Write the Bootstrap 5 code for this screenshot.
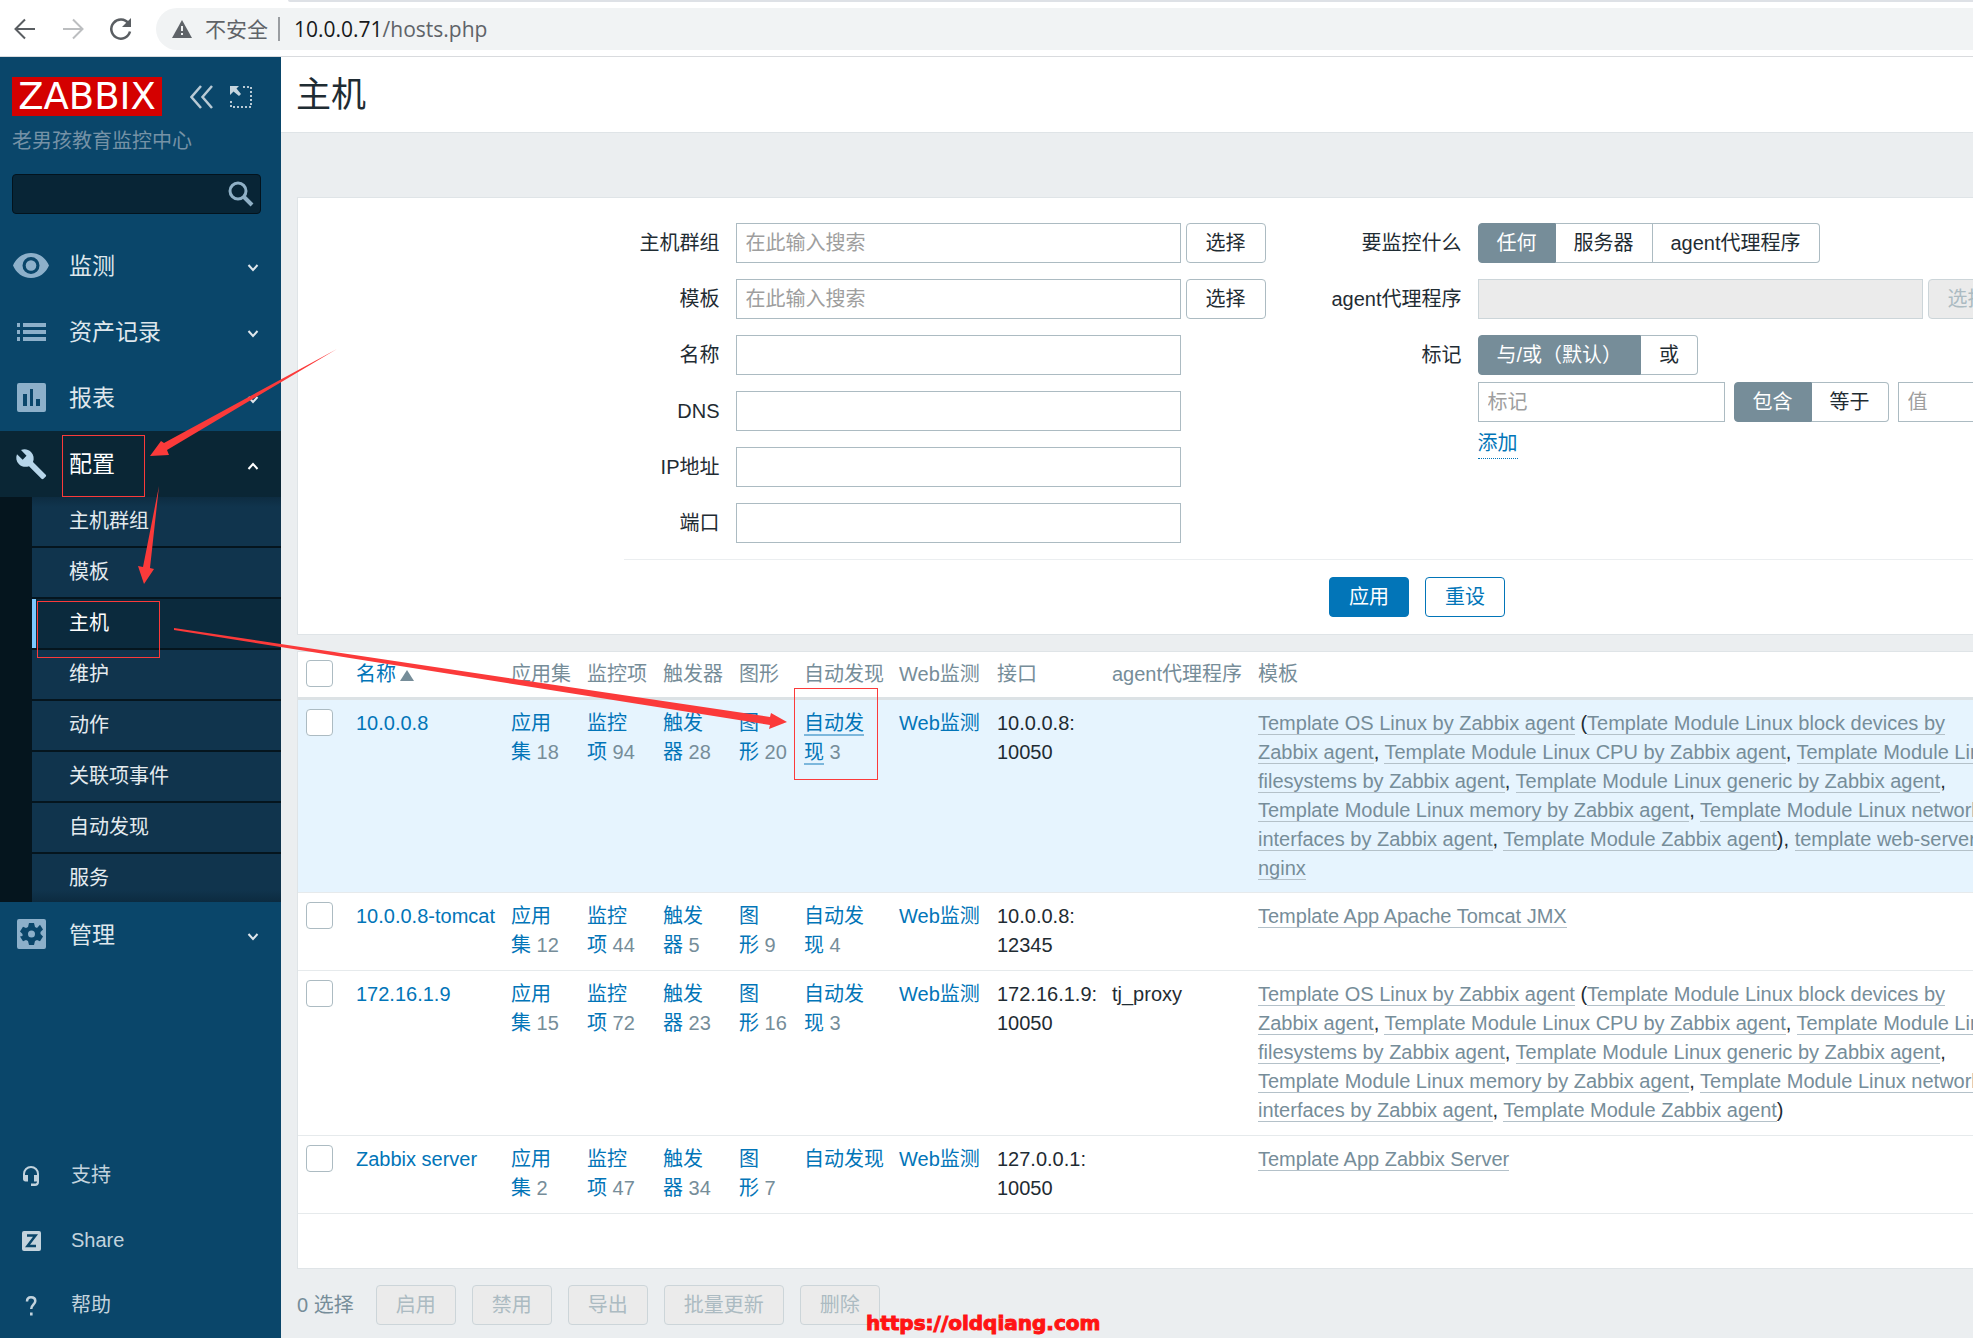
<!DOCTYPE html>
<html lang="zh-CN">
<head>
<meta charset="utf-8">
<meta name="viewport" content="width=device-width, initial-scale=1">
<title>主机</title>
<link href="https://cdn.jsdelivr.net/npm/bootstrap@5.3.0/dist/css/bootstrap.min.css" rel="stylesheet">
<style>
  :root { --ink:#1f2c33; --grey:#768d99; --line:#acbbc2; --blue:#0275b8; --soft:#dfe4e7; --mark:#fb3a3a; }
  body { font-family:"Liberation Sans","Noto Sans CJK SC",sans-serif; font-size:20px; line-height:29px; color:var(--ink); background:#ebeef0; overflow:hidden; }
  a { text-decoration:none; }

  /* browser bar */
  .browser-bar { height:57px; background:#fff; border-bottom:1px solid #d9dbde; padding:8px 0 6px 12px; gap:22px; }
  .tab-edge { position:absolute; top:0; left:288px; right:0; height:2px; background:#dee1e6; border-bottom-left-radius:4px; }
  .browser-btn { border:0; background:none; padding:0; width:26px; height:26px; line-height:0; }
  .url-pill { height:42px; border-radius:21px 0 0 21px; background:#f1f3f4; padding-left:16px; font-family:"Open Sans","Noto Sans CJK SC",sans-serif; font-size:21px; color:#5f6368; }
  .url-pill svg { margin-right:13px; }
  .url-pill b { font-weight:400; color:#17181a; }
  .url-split { width:2px; height:24px; background:#9a9da1; margin:0 14px 0 10px; }

  /* sidebar */
  .side { width:281px; background:#0a466a; color:#dfe7ec; }
  .side a { color:inherit; }
  .side-head { padding:20px 12px 0; }
  .logo { width:150px; height:39px; background:#d40000; color:#fff; font-family:"DejaVu Sans",sans-serif; font-size:37px; line-height:39px; }
  .server-name { color:#7592a6; height:29px; margin-top:11px; }
  .side-search { height:40px; width:249px; margin-top:18px; background:#082536; border:1px solid #03131d; border-radius:4px; }
  .side-search input { background:none; border:0; outline:0; color:#fff; min-width:0; padding:0 8px; }
  .side-search button { background:none; border:0; padding:0 6px 0 0; line-height:0; }
  .menu { margin-top:19px; }
  .menu-top { height:66px; padding:0 22px 0 13px; font-size:23px; }
  .menu-top > svg:first-child { width:36px; height:36px; margin-right:20px; color:#8db0ca; fill:currentColor; }
  .menu-top.open { background:#0a2635; color:#fff; height:66px; }
  .menu-top.open > svg:first-child { color:#b7d6ea; }
  .chev { width:12px; height:8px; fill:none; stroke:currentColor; stroke-width:2; margin-top:4px; }
  .submenu { background:#05151e; padding-left:32px; gap:2px; margin:0; list-style:none; display:flex; flex-direction:column; }
  .submenu a { display:block; height:49px; line-height:49px; background:#10344d; padding-left:37px; color:#e4ebef; }
  .submenu a.now { background:#0b2a3d; border-left:4px solid #7cc8ff; padding-left:33px; color:#fff; }
  .submenu li:first-child a { background:linear-gradient(#0d2c41,#10344d 10px); }
  .submenu li:last-child a { height:48px; background:linear-gradient(#10344d 36px,#0c2b40); }
  .side-foot a { height:65px; padding-left:20px; gap:29px; color:#c3d3dd; }
  .side-foot svg { width:22px; height:22px; fill:currentColor; }

  /* content */
  .content { min-width:0; overflow:hidden; }
  .page-head { height:76px; background:#fff; border-bottom:1px solid var(--soft); padding:17px 15px; }
  .page-head h1 { font-size:35px; line-height:42px; font-weight:400; margin:0; }
  .canvas-wide { min-width:2272px; padding:64px 16px 0; }
  .panel { background:#fff; border:1px solid var(--soft); }
  .filter-body { width:1587px; margin:0 auto; padding-top:25px; }
  .filter-cols { padding-bottom:16px; border-bottom:1px solid #ebeef0; }
  .left-fields { width:650px; gap:16px; }
  .right-fields { gap:16px; }
  .frow { display:flex; gap:16px; }
  .frow > .lbl { text-align:right; line-height:40px; flex:none; }
  .left-fields .lbl { width:96px; }
  .right-fields .lbl { width:188px; }
  .with-pick { display:flex; gap:5px; }
  .box { height:40px; border:1px solid var(--line); border-radius:0; padding:0 9px; font-size:20px; color:var(--ink); background:#fff; }
  .box::placeholder { color:#9e9e9e; opacity:1; }
  .box:disabled { background:#ebebeb; border-color:#ccd5d9; }
  .w-full-box { width:445px; }
  .w-tag-box { width:247px; }
  .zbtn { height:40px; border:1px solid var(--line); border-radius:4px; padding:0 19px; font-size:20px; line-height:38px; color:var(--ink); background:#fff; white-space:nowrap; }
  .zbtn:disabled { background:#ebebeb; border-color:#ccd5d9; color:#acbbc2; opacity:1; }
  .zbtn.main-btn { background:var(--blue); border-color:var(--blue); color:#fff; }
  .zbtn.alt-btn { border-color:var(--blue); color:var(--blue); }
  .seg .zbtn { border-radius:0; padding:0 18px; border-left:0; }
  .seg .zbtn:nth-of-type(1) { border-left:1px solid var(--line); border-radius:4px 0 0 4px; }
  .seg .zbtn:last-child { border-radius:0 4px 4px 0; }
  .seg .btn-check:checked + .zbtn { background:var(--grey); border-color:var(--grey); color:#fff; }
  .tag-rows { display:flex; flex-direction:column; gap:7px; }
  .tag-row { display:flex; gap:9px; }
  .add-link { color:var(--blue); border-bottom:1px dotted var(--blue); line-height:29px; align-self:flex-start; }
  .filter-foot { padding:17px 0; gap:16px; }

  .hosts { table-layout:fixed; width:100%; margin:0; border-collapse:separate; border-spacing:0; }
  .hosts th, .hosts td { padding:9px 8px; vertical-align:top; border-bottom:1px solid #e6eaec; text-align:left; font-weight:400; }
  .hosts tr + tr td { padding-bottom:10px; }
  .hosts th { color:var(--grey); padding:8px 8px; border-bottom:3px solid #dce2e5; white-space:nowrap; }
  .hosts a { color:var(--blue); }
  .hosts .num { color:var(--grey); }
  .hosts tr.hover td { background:#e6f4fe; }
  .hosts a.under { border-bottom:2px solid #7cb7dc; }
  .hosts a.tpl { color:var(--grey); border-bottom:1px solid #b4c1c9; }
  .hosts .form-check-input { width:27px; height:27px; margin:0; border:1px solid var(--line); border-radius:4px; display:block; float:none; background-color:#fff; }
  .sort-up { display:inline-block; border:7px solid transparent; border-top:0; border-bottom:11px solid var(--grey); margin-left:-2px; }
  .c-check{width:50px} .c-name{width:155px} .c-three{width:76px} .c-two{width:65px} .c-disc{width:95px} .c-web{width:98px} .c-if{width:115px} .c-proxy{width:146px} .c-tpl{width:764px}
  .table-tail { height:54px; }
  .actions { padding:16px 0 13px; color:var(--grey); gap:16px; }
  .actions .count { margin-right:6px; line-height:40px; }

  /* annotations over the page */
  .notes { position:absolute; left:0; top:0; width:1973px; height:1338px; pointer-events:none; }
  .notes rect { fill:none; stroke:var(--mark); stroke-width:1; }
  .notes polygon { fill:var(--mark); }
  .site-stamp { position:absolute; left:866px; top:1309px; font-family:"DejaVu Sans",sans-serif; font-weight:700; font-size:20px; color:#ff1414; -webkit-text-stroke:1px #ff1414; }
</style>
<script src="https://cdn.jsdelivr.net/npm/bootstrap@5.3.0/dist/js/bootstrap.bundle.min.js"></script>
</head>
<body>
<div class="d-flex flex-column min-vh-100 position-relative">
  <header class="browser-bar d-flex align-items-center">
    <span class="tab-edge"></span>
    <button class="browser-btn" type="button" aria-label="后退"><svg width="26" height="26" viewBox="0 0 26 26" fill="none" stroke="#5a5e62" stroke-width="2"><path d="M23 13H4M13 3.500 3.500 13l9.500 9.500"/></svg></button>
    <button class="browser-btn" type="button" aria-label="前进"><svg width="26" height="26" viewBox="0 0 26 26" fill="none" stroke="#bcbec0" stroke-width="2"><path d="M3 13h19M13 3.500 22.500 13 13 22.500"/></svg></button>
    <button class="browser-btn" type="button" aria-label="刷新"><svg width="26" height="26" viewBox="0 0 26 26" fill="none" stroke="#5a5e62" stroke-width="2.500"><path d="M20.500 7.500A9.500 9.500 0 1 0 22 15.500"/><path d="M23 2v9h-9z" fill="#5a5e62" stroke="none"/></svg></button>
    <div class="url-pill d-flex align-items-center flex-grow-1">
      <svg width="20" height="18" viewBox="0 0 20 18"><path d="M10 0 20 18H0z" fill="#5f6368"/><path d="M10 6v5M10 13v2" stroke="#f1f3f4" stroke-width="2"/></svg>
      <span>不安全</span><span class="url-split"></span><span><b>10.0.0.71</b>/hosts.php</span>
    </div>
  </header>

  <div class="d-flex flex-grow-1">
    <aside class="side d-flex flex-column flex-shrink-0">
      <div class="side-head">
        <div class="d-flex align-items-center">
          <a class="logo text-center text-white" href="#">ZABBIX</a>
          <a href="#" class="d-flex ms-4 ps-1" aria-label="收起"><svg width="24" height="24" viewBox="0 0 24 24" fill="none" stroke="#b9cad5" stroke-width="2.500"><path d="M11 1 1.500 12 11 23M22 1 12.500 12 22 23"/></svg></a>
          <a href="#" class="d-flex ms-3" aria-label="隐藏"><svg width="22" height="22" viewBox="0 0 22 22" fill="none" stroke="#b9cad5"><path d="M13 1h8v20H1v-8" stroke-width="2" stroke-dasharray="2 2"/><path d="M0 0h9L6.500 2.500 11 8l-2 2-5.500-4.500L0 9z" fill="#c6d5de" stroke="none"/></svg></a>
        </div>
        <div class="server-name">老男孩教育监控中心</div>
        <form class="side-search d-flex align-items-center">
          <input type="text" class="flex-grow-1" aria-label="搜索">
          <button type="button" aria-label="搜索"><svg width="26" height="26" viewBox="0 0 26 26" fill="none" stroke="#8fb0c6"><circle cx="10" cy="10" r="8" stroke-width="3"/><path d="m15.500 15.500 8.500 8.500" stroke-width="4"/></svg></button>
        </form>
      </div>

      <nav class="menu">
        <a class="menu-top d-flex align-items-center" href="#"><svg viewBox="0 0 36 36"><path fill-rule="evenodd" d="M18 5C9.500 5 3 10.500 0 17.500 3 24.500 9.500 30 18 30s15-5.500 18-12.500C33 10.500 26.500 5 18 5zm0 4a8.500 8.500 0 1 1 0 17 8.500 8.500 0 0 1 0-17z"/><circle cx="18" cy="17.500" r="5.300"/></svg>监测<svg class="chev ms-auto" viewBox="0 0 12 8"><path d="m1.500 1 4.500 5 4.500-5"/></svg></a>
        <a class="menu-top d-flex align-items-center" href="#"><svg viewBox="0 0 36 36"><path d="M4 9h3v4H4zm6 0h23v4H10zM4 16h3v4H4zm6 0h23v4H10zM4 23h3v4H4zm6 0h23v4H10z"/></svg>资产记录<svg class="chev ms-auto" viewBox="0 0 12 8"><path d="m1.500 1 4.500 5 4.500-5"/></svg></a>
        <a class="menu-top d-flex align-items-center" href="#"><svg viewBox="0 0 36 36"><path fill-rule="evenodd" d="M6 3h25a2 2 0 0 1 2 2v25a2 2 0 0 1-2 2H6a2 2 0 0 1-2-2V5a2 2 0 0 1 2-2zm4 11v12h4V14zm7-5v17h3V9zm6 10v7h4v-7z"/></svg>报表<svg class="chev ms-auto" viewBox="0 0 12 8"><path d="m1.500 1 4.500 5 4.500-5"/></svg></a>
        <a class="menu-top open d-flex align-items-center" href="#"><svg viewBox="0 0 36 36"><path d="M32.500 28.500 20 16c1.400-3.400.7-7.300-2-10-2.800-2.800-6.600-3.300-10-2l5.500 5.700-3.800 4L4 8.200c-1.400 3.300-.8 7.200 2 10 2.700 2.700 6.600 3.300 10 2l12.500 12.500c.6.600 1.400.6 2 0l2.300-2.300c.5-.6.5-1.400-.3-1.900z"/></svg>配置<svg class="chev ms-auto" viewBox="0 0 12 8"><path d="m1.500 7 4.500-5 4.500 5"/></svg></a>
        <ul class="submenu">
          <li><a href="#">主机群组</a></li>
          <li><a href="#">模板</a></li>
          <li><a class="now" href="#">主机</a></li>
          <li><a href="#">维护</a></li>
          <li><a href="#">动作</a></li>
          <li><a href="#">关联项事件</a></li>
          <li><a href="#">自动发现</a></li>
          <li><a href="#">服务</a></li>
        </ul>
        <a class="menu-top d-flex align-items-center" href="#"><svg viewBox="0 0 36 36"><path fill-rule="evenodd" d="M6 2h25a2 2 0 0 1 2 2v26a2 2 0 0 1-2 2H6a2 2 0 0 1-2-2V4a2 2 0 0 1 2-2zm10 4-1 4-2 1-3-1.300-3 4.800 2.500 2.500v2L7 19.500l3 4.800 3-1.300 2 1 1 4h5l1-4 2-1 3 1.300 3-4.800-2.500-2.500v-2l2.500-2.500-3-4.800L24 11l-2-1-1-4zm2.500 7.500a3.500 3.500 0 1 1 0 7 3.500 3.500 0 0 1 0-7z"/></svg>管理<svg class="chev ms-auto" viewBox="0 0 12 8"><path d="m1.500 1 4.500 5 4.500-5"/></svg></a>
      </nav>

      <nav class="side-foot mt-auto">
        <a class="d-flex align-items-center" href="#"><svg viewBox="0 0 22 22"><path d="M11 1a8 8 0 0 0-8 8v5c0 1.500 1 2.500 2.500 2.500H8V10H5V9a6 6 0 0 1 12 0v1h-3v6.500h3c0 1.500-1 2-2 2h-4V21h4c2.500 0 4-1.500 4-4V9a8 8 0 0 0-8-8z"/></svg>支持</a>
        <a class="d-flex align-items-center" href="#"><svg viewBox="0 0 22 22"><rect x="2" y="1" width="19" height="20" rx="2"/><path d="M7 5.500h8.500L7.500 16H16" fill="none" stroke="#0a466a" stroke-width="2.500"/></svg>Share</a>
        <a class="d-flex align-items-center" href="#"><svg viewBox="0 0 22 22"><path d="M7 6.500C7 3.500 8.500 2.200 11 2.200s4.300 1.300 4.300 3.800C15.300 9.500 11.200 10 11.200 14" fill="none" stroke="currentColor" stroke-width="2.500"/><path d="M10 17.500h2.600V20.500H10z"/></svg>帮助</a>
      </nav>
    </aside>

    <main class="content flex-grow-1">
      <div class="page-head"><h1>主机</h1></div>
      <div class="canvas-wide">
        <form class="panel mb-3">
          <div class="filter-body">
            <div class="filter-cols d-flex">
              <div class="left-fields d-flex flex-column">
                <div class="frow"><label class="lbl" for="f-group">主机群组</label><div class="with-pick"><input id="f-group" class="box w-full-box" type="text" placeholder="在此输入搜索"><button class="zbtn" type="button">选择</button></div></div>
                <div class="frow"><label class="lbl" for="f-tpl">模板</label><div class="with-pick"><input id="f-tpl" class="box w-full-box" type="text" placeholder="在此输入搜索"><button class="zbtn" type="button">选择</button></div></div>
                <div class="frow"><label class="lbl" for="f-name">名称</label><input id="f-name" class="box w-full-box" type="text"></div>
                <div class="frow"><label class="lbl" for="f-dns">DNS</label><input id="f-dns" class="box w-full-box" type="text"></div>
                <div class="frow"><label class="lbl" for="f-ip">IP地址</label><input id="f-ip" class="box w-full-box" type="text"></div>
                <div class="frow"><label class="lbl" for="f-port">端口</label><input id="f-port" class="box w-full-box" type="text"></div>
              </div>
              <div class="right-fields d-flex flex-column">
                <div class="frow"><span class="lbl" id="l-mon">要监控什么</span>
                  <div class="btn-group seg" role="group" aria-labelledby="l-mon">
                    <input type="radio" class="btn-check" name="mon" id="m1" checked><label class="zbtn" for="m1">任何</label>
                    <input type="radio" class="btn-check" name="mon" id="m2"><label class="zbtn" for="m2">服务器</label>
                    <input type="radio" class="btn-check" name="mon" id="m3"><label class="zbtn" for="m3">agent代理程序</label>
                  </div></div>
                <div class="frow"><label class="lbl" for="f-proxy">agent代理程序</label><div class="with-pick"><input id="f-proxy" class="box w-full-box" type="text" disabled><button class="zbtn" type="button" disabled>选择</button></div></div>
                <div class="frow"><span class="lbl" id="l-tag">标记</span>
                  <div class="tag-rows">
                    <div class="btn-group seg align-self-start" role="group" aria-labelledby="l-tag">
                      <input type="radio" class="btn-check" name="ev" id="e1" checked><label class="zbtn" for="e1">与/或（默认）</label>
                      <input type="radio" class="btn-check" name="ev" id="e2"><label class="zbtn" for="e2">或</label>
                    </div>
                    <div class="tag-row">
                      <input class="box w-tag-box" type="text" placeholder="标记" aria-label="标记">
                      <div class="btn-group seg" role="group" aria-label="运算符">
                        <input type="radio" class="btn-check" name="op" id="o1" checked><label class="zbtn" for="o1">包含</label>
                        <input type="radio" class="btn-check" name="op" id="o2"><label class="zbtn" for="o2">等于</label>
                      </div>
                      <input class="box w-tag-box" type="text" placeholder="值" aria-label="值">
                    </div>
                    <a class="add-link" href="#">添加</a>
                  </div></div>
              </div>
            </div>
            <div class="filter-foot d-flex justify-content-center">
              <button class="zbtn main-btn" type="button">应用</button>
              <button class="zbtn alt-btn" type="button">重设</button>
            </div>
          </div>
        </form>

        <div class="panel">
          <table class="hosts">
            <colgroup><col class="c-check"><col class="c-name"><col class="c-three"><col class="c-three"><col class="c-three"><col class="c-two"><col class="c-disc"><col class="c-web"><col class="c-if"><col class="c-proxy"><col class="c-tpl"><col></colgroup>
            <thead><tr>
              <th><input class="form-check-input" type="checkbox" aria-label="全选"></th>
              <th><a href="#">名称 <span class="sort-up"></span></a></th><th>应用集</th><th>监控项</th><th>触发器</th><th>图形</th><th>自动发现</th><th>Web监测</th><th>接口</th><th>agent代理程序</th><th>模板</th><th></th>
            </tr></thead>
            <tbody>
              <tr class="hover">
                <td><input class="form-check-input" type="checkbox" aria-label="10.0.0.8"></td>
                <td><a href="#">10.0.0.8</a></td>
                <td><a href="#">应用集</a>&nbsp;<span class="num">18</span></td>
                <td><a href="#">监控项</a>&nbsp;<span class="num">94</span></td>
                <td><a href="#">触发器</a>&nbsp;<span class="num">28</span></td>
                <td><a href="#">图形</a>&nbsp;<span class="num">20</span></td>
                <td><a class="under" href="#">自动发现</a>&nbsp;<span class="num">3</span></td>
                <td><a href="#">Web监测</a></td>
                <td>10.0.0.8: 10050</td><td></td>
                <td><a class="tpl" href="#">Template OS Linux by Zabbix agent</a> (<a class="tpl" href="#">Template Module Linux block devices by Zabbix agent</a>, <a class="tpl" href="#">Template Module Linux CPU by Zabbix agent</a>, <a class="tpl" href="#">Template Module Linux filesystems by Zabbix agent</a>, <a class="tpl" href="#">Template Module Linux generic by Zabbix agent</a>, <a class="tpl" href="#">Template Module Linux memory by Zabbix agent</a>, <a class="tpl" href="#">Template Module Linux network interfaces by Zabbix agent</a>, <a class="tpl" href="#">Template Module Zabbix agent</a>), <a class="tpl" href="#">template web-server nginx</a></td><td></td>
              </tr>
              <tr>
                <td><input class="form-check-input" type="checkbox" aria-label="10.0.0.8-tomcat"></td>
                <td><a href="#" class="text-nowrap">10.0.0.8-tomcat</a></td>
                <td><a href="#">应用集</a>&nbsp;<span class="num">12</span></td>
                <td><a href="#">监控项</a>&nbsp;<span class="num">44</span></td>
                <td><a href="#">触发器</a>&nbsp;<span class="num">5</span></td>
                <td><a href="#">图形</a>&nbsp;<span class="num">9</span></td>
                <td><a href="#">自动发现</a>&nbsp;<span class="num">4</span></td>
                <td><a href="#">Web监测</a></td>
                <td>10.0.0.8: 12345</td><td></td>
                <td><a class="tpl" href="#">Template App Apache Tomcat JMX</a></td><td></td>
              </tr>
              <tr>
                <td><input class="form-check-input" type="checkbox" aria-label="172.16.1.9"></td>
                <td><a href="#">172.16.1.9</a></td>
                <td><a href="#">应用集</a>&nbsp;<span class="num">15</span></td>
                <td><a href="#">监控项</a>&nbsp;<span class="num">72</span></td>
                <td><a href="#">触发器</a>&nbsp;<span class="num">23</span></td>
                <td><a href="#">图形</a>&nbsp;<span class="num">16</span></td>
                <td><a href="#">自动发现</a>&nbsp;<span class="num">3</span></td>
                <td><a href="#">Web监测</a></td>
                <td>172.16.1.9: 10050</td><td>tj_proxy</td>
                <td><a class="tpl" href="#">Template OS Linux by Zabbix agent</a> (<a class="tpl" href="#">Template Module Linux block devices by Zabbix agent</a>, <a class="tpl" href="#">Template Module Linux CPU by Zabbix agent</a>, <a class="tpl" href="#">Template Module Linux filesystems by Zabbix agent</a>, <a class="tpl" href="#">Template Module Linux generic by Zabbix agent</a>, <a class="tpl" href="#">Template Module Linux memory by Zabbix agent</a>, <a class="tpl" href="#">Template Module Linux network interfaces by Zabbix agent</a>, <a class="tpl" href="#">Template Module Zabbix agent</a>)</td><td></td>
              </tr>
              <tr>
                <td><input class="form-check-input" type="checkbox" aria-label="Zabbix server"></td>
                <td><a href="#">Zabbix server</a></td>
                <td><a href="#">应用集</a>&nbsp;<span class="num">2</span></td>
                <td><a href="#">监控项</a>&nbsp;<span class="num">47</span></td>
                <td><a href="#">触发器</a>&nbsp;<span class="num">34</span></td>
                <td><a href="#">图形</a>&nbsp;<span class="num">7</span></td>
                <td><a href="#" class="text-nowrap">自动发现</a></td>
                <td><a href="#">Web监测</a></td>
                <td>127.0.0.1: 10050</td><td></td>
                <td><a class="tpl" href="#">Template App Zabbix Server</a></td><td></td>
              </tr>
            </tbody>
          </table>
          <div class="table-tail"></div>
        </div>

        <div class="actions d-flex">
          <span class="count">0 选择</span>
          <button class="zbtn" type="button" disabled>启用</button>
          <button class="zbtn" type="button" disabled>禁用</button>
          <button class="zbtn" type="button" disabled>导出</button>
          <button class="zbtn" type="button" disabled>批量更新</button>
          <button class="zbtn" type="button" disabled>删除</button>
        </div>
      </div>
    </main>
  </div>

  <svg class="notes" viewBox="0 0 1973 1338" aria-hidden="true">
    <rect x="62.500" y="435.500" width="82" height="61"/>
    <rect x="37.500" y="601.500" width="122" height="56"/>
    <rect x="794.500" y="688.500" width="83" height="91"/>
    <polygon points="337,349 164,443 161,441 150,456 169,455 167,450"/>
    <polygon points="159,486 143,567 138,566 144,584 154,569 150,568"/>
    <polygon points="174,628 770,717 771,713 787,722 769,729 770,725 174,630"/>
  </svg>
  <div class="site-stamp">https://oldqiang.com</div>
</div>
</body>
</html>
